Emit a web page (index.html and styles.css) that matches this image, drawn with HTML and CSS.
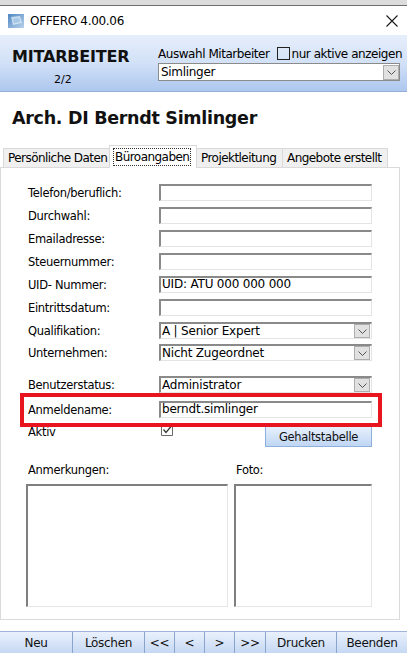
FILE: index.html
```html
<!DOCTYPE html>
<html lang="de">
<head>
<meta charset="utf-8">
<title>OFFERO</title>
<link rel="stylesheet" href="styles.css">
</head>
<body>
<div class="window">
  <div class="topstrip"></div>
  <div class="titlebar">
    <svg class="appicon" width="16" height="14" viewBox="0 0 16 14">
      <defs>
        <linearGradient id="ig" x1="0" y1="0" x2="1" y2="1">
          <stop offset="0" stop-color="#4f86c2"/>
          <stop offset="1" stop-color="#b9d3ec"/>
        </linearGradient>
      </defs>
      <rect x="0" y="0" width="16" height="14" fill="url(#ig)"/>
      <path d="M3 3 L12 2 L14 9 L5 11 Z" fill="#dbe8f5" opacity="0.8"/>
      <path d="M5 5 L11 4 L12 8 L6 9 Z" fill="#9cc0e2" opacity="0.8"/>
    </svg>
    <span class="apptitle">OFFERO 4.00.06</span>
    <svg class="close" width="12" height="12" viewBox="0 0 12 12">
      <path d="M0.5 0.5 L11.5 11.5 M11.5 0.5 L0.5 11.5" stroke="#1a1a1a" stroke-width="1.1"/>
    </svg>
  </div>
  <div class="header">
    <div class="hleft">
      <div class="htitle">MITARBEITER</div>
      <div class="hcount">2/2</div>
    </div>
    <div class="hright">
      <div class="hsel">
        <span>Auswahl Mitarbeiter</span>
        <span class="hchk"></span>
        <span>nur aktive anzeigen</span>
      </div>
      <div class="combo hcombo">
        <span class="ctext">Simlinger</span>
        <span class="dd"><svg width="9" height="5" viewBox="0 0 9 5"><path d="M0.5 0.5 L4.5 4.5 L8.5 0.5" fill="none" stroke="#555" stroke-width="1"/></svg></span>
      </div>
    </div>
  </div>

  <h1 class="name">Arch. DI Berndt Simlinger</h1>

  <div class="tabs">
    <div class="tab">Persönliche Daten</div>
    <div class="tab active"><span class="focus">Büroangaben</span></div>
    <div class="tab">Projektleitung</div>
    <div class="tab">Angebote erstellt</div>
  </div>

  <div class="panel">
    <div class="row"><label>Telefon/beruflich:</label><div class="field"></div></div>
    <div class="row"><label>Durchwahl:</label><div class="field"></div></div>
    <div class="row"><label>Emailadresse:</label><div class="field"></div></div>
    <div class="row"><label>Steuernummer:</label><div class="field"></div></div>
    <div class="row"><label>UID- Nummer:</label><div class="field">UID: ATU 000 000 000</div></div>
    <div class="row"><label>Eintrittsdatum:</label><div class="field"></div></div>
    <div class="row"><label>Qualifikation:</label><div class="field combo"><span class="ctext">A | Senior Expert</span><span class="dd"><svg width="9" height="5" viewBox="0 0 9 5"><path d="M0.5 0.5 L4.5 4.5 L8.5 0.5" fill="none" stroke="#555" stroke-width="1"/></svg></span></div></div>
    <div class="row r-unt"><label>Unternehmen:</label><div class="field combo"><span class="ctext">Nicht Zugeordnet</span><span class="dd"><svg width="9" height="5" viewBox="0 0 9 5"><path d="M0.5 0.5 L4.5 4.5 L8.5 0.5" fill="none" stroke="#555" stroke-width="1"/></svg></span></div></div>
    <div class="row r-ben"><label>Benutzerstatus:</label><div class="field combo"><span class="ctext">Administrator</span><span class="dd"><svg width="9" height="5" viewBox="0 0 9 5"><path d="M0.5 0.5 L4.5 4.5 L8.5 0.5" fill="none" stroke="#555" stroke-width="1"/></svg></span></div></div>
    <div class="row r-anm highlight"><label>Anmeldename:</label><div class="field">berndt.simlinger</div></div>
    <div class="row r-akt">
      <label>Aktiv</label>
      <div class="aktiv">
        <span class="tick"><svg width="12" height="11" viewBox="0 0 12 11"><path d="M0.5 0 V10.5 H11.5 V0" fill="none" stroke="#6a6a6a" stroke-width="1"/><path d="M2.5 4.5 L5 7.5 L10 1.5" fill="none" stroke="#333" stroke-width="1.2"/></svg></span>
        <button class="btn">Gehaltstabelle</button>
      </div>
    </div>
    <div class="notes">
      <div class="ncol ncol-a">
        <div class="nlabel">Anmerkungen:</div>
        <div class="box"></div>
      </div>
      <div class="ncol ncol-b">
        <div class="nlabel">Foto:</div>
        <div class="box"></div>
      </div>
    </div>
  </div>

  <div class="bar">
    <button class="bb">Neu</button>
    <button class="bb">Löschen</button>
    <button class="bb">&lt;&lt;</button>
    <button class="bb">&lt;</button>
    <button class="bb">&gt;</button>
    <button class="bb">&gt;&gt;</button>
    <button class="bb">Drucken</button>
    <button class="bb">Beenden</button>
  </div>
</div>
</body>
</html>
```
FILE: styles.css
```css
* { box-sizing: border-box; }
html, body { margin: 0; padding: 0; }
body {
  width: 407px;
  height: 653px;
  overflow: hidden;
  background: #ffffff;
  font-family: "DejaVu Sans", Verdana, sans-serif;
  font-size: 11px;
  color: #000;
}
.window { display: flex; flex-direction: column; height: 653px; }

.topstrip {
  height: 6px;
  background: #dcdcdc;
  border-bottom: 1px solid #6e6e6e;
}
.titlebar {
  height: 29px;
  display: flex;
  align-items: center;
  padding-left: 8px;
  background: #fff;
}
.appicon { flex: none; margin-top: 1px; }
.apptitle { margin-left: 6px; font-size: 12px; letter-spacing: -0.3px; }
.close { margin-left: auto; margin-right: 9px; }

.header {
  height: 57px;
  display: flex;
  background: linear-gradient(#e6eefb, #d2e1f7 50%, #adc7ee);
  border-bottom: 1px solid #95aed3;
}
.hleft { width: 150px; padding-top: 12px; }
.htitle {
  padding-left: 12px;
  font-size: 16px;
  font-weight: bold;
  letter-spacing: -0.2px;
  color: #111;
}
.hcount { padding-left: 54px; margin-top: 7px; font-size: 11px; }
.hright { flex: 1; padding-top: 11px; padding-left: 8px; }
.hsel { display: flex; align-items: center; height: 15px; font-size: 12px; letter-spacing: -0.45px; }
.hchk {
  width: 13px; height: 13px;
  border: 1px solid #222;
  margin: 0 1px 0 8px;
}
.combo { display: flex; align-items: center; position: relative; }
.hcombo {
  margin-top: 2px;
  width: 242px;
  height: 18px;
  background: #fff;
  border: 1px solid #8b8b8b;
  padding-left: 2px;
  font-size: 12px;
  letter-spacing: -0.3px;
}
.ctext { flex: 1; white-space: nowrap; }
.dd {
  flex: none;
  width: 16px;
  height: 15px;
  background: #e1e1e1;
  border: 1px solid #adadad;
  display: flex;
  align-items: center;
  justify-content: center;
}

.name {
  margin: 0;
  height: 53px;
  padding: 16px 0 0 12px;
  font-size: 17.5px;
  font-weight: bold;
  letter-spacing: -0.3px;
  color: #111;
}

.tabs { display: flex; height: 22px; align-items: flex-end; padding-left: 3px; position: relative; z-index: 1; }
.tab {
  height: 19px;
  padding: 0 4px;
  background: #f0f0f0;
  border: 1px solid #d9d9d9;
  border-bottom: none;
  display: flex;
  align-items: center;
  font-size: 12px;
  letter-spacing: -0.55px;
  margin-right: -1px;
  white-space: nowrap;
}
.tab:nth-child(1) { width: 107px; }
.tab:nth-child(2) { width: 88px; }
.tab:nth-child(3) { width: 87px; }
.tab:nth-child(4) { width: 106px; }
.tab.active {
  height: 23px;
  background: #fff;
  margin-bottom: -1px;
  padding: 2px 3px 3px;
}
.focus { border: 1px dotted #333; padding: 0 1px; height: 18px; display: flex; align-items: center; }

.panel {
  width: 400px;
  height: 453px;
  border: 1px solid #dadada;
  padding: 16px 0 10px 25px;
}
.row { display: flex; align-items: center; width: 346px; height: 17px; margin-top: 6px; }
.row:first-child { margin-top: 0; }
.row.r-unt { margin-top: 5px; }
.row.r-ben { margin-top: 15px; }
.row.r-anm { margin-top: 8px; }
.row label {
  width: 133px;
  padding-left: 2px;
  font-size: 11.5px;
  letter-spacing: -0.3px;
}
.field {
  width: 213px;
  height: 17px;
  background: #fff;
  border-top: 2px solid #8a8a8a;
  border-left: 2px solid #8a8a8a;
  border-right: 1px solid #e4e4e4;
  border-bottom: 1px solid #e4e4e4;
  padding-left: 1px;
  font-size: 12px;
  letter-spacing: -0.2px;
  line-height: 13px;
  white-space: nowrap;
}
.field.combo .dd { height: 14px; margin-right: 1px; }

.highlight { position: relative; }
.highlight::after {
  content: "";
  position: absolute;
  left: -6px;
  right: -10px;
  top: -8px;
  bottom: -9px;
  border: 4px solid #e8141e;
  pointer-events: none;
  z-index: 2;
}

.row.r-akt { height: 21px; margin-top: 7px; align-items: flex-start; }
.aktiv { display: flex; align-items: flex-start; width: 213px; }
.tick { margin-left: 2px; display: flex; }
.btn {
  margin-left: auto;
  margin-top: 1px;
  width: 107px;
  height: 21px;
  border: 1px solid #8fb0dd;
  background: linear-gradient(#e7f0fc, #c0d6f4);
  font-family: inherit;
  font-size: 11.5px;
  letter-spacing: -0.3px;
  color: #111;
  padding: 0;
}

.notes { display: flex; margin-top: 17px; }
.ncol-a { width: 208px; }
.ncol-b { width: 138px; }
.nlabel { padding-left: 2px; height: 21px; font-size: 11.5px; letter-spacing: -0.3px; }
.box {
  height: 123px;
  border-top: 2px solid #7f7f7f;
  border-left: 2px solid #7f7f7f;
  border-right: 1px solid #e6e6e6;
  border-bottom: 1px solid #e6e6e6;
}
.ncol-a .box { width: 202px; }
.ncol-b .box { width: 138px; }

.bar {
  margin-top: auto;
  height: 22px;
  display: grid;
  grid-template-columns: 72px 72px 30px 30px 30px 31px 71px 1fr;
  border-top: 1px solid #9db5d8;
  background: linear-gradient(#eaf1fc, #c5d8f3);
}
.bb {
  border: none;
  border-left: 1px solid #8aa4cb;
  background: transparent;
  font-family: inherit;
  font-size: 12px;
  letter-spacing: -0.3px;
  color: #111;
  padding: 0;
}
.bb:first-child { border-left: none; }
```
